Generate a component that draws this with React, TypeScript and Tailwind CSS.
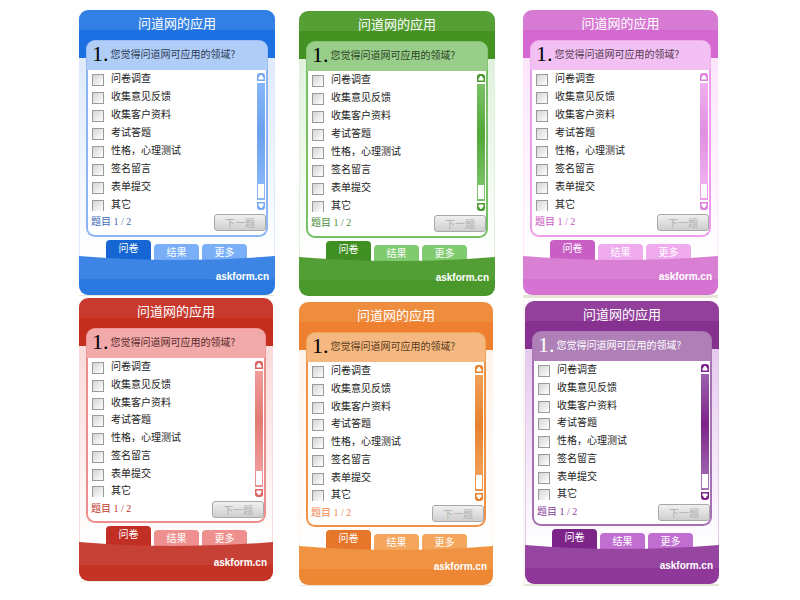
import React from 'react';

type Theme = { id: string; colors: string; compact: boolean; frame: string; mat: string };

const OPTIONS = ['问卷调查', '收集意见反馈', '收集客户资料', '考试答题', '性格，心理测试', '签名留言', '表单提交', '其它'];

const BLUE: Theme = {
  id: 'blue',
  compact: false,
  frame: 'w-[196px]',
  mat: 'border-b border-[#e9e7da]',
  colors:
    '[--top:#3380e4] [--mid:#1c70e2] [--head:#b0cdf8] [--line:#8bb5f5] [--tint:#dfeafb] [--active:#1566d2] [--tab:#7aaff7] [--foot:#3c85e4] [--base:#2a79e0] [--ink:#3b68b8] [--bar:#86b5fa] [--core:#6ba2ec] [--knob:#78a8f0] [--num:#000000] [--ask:#2c3c55]',
};
const GREEN: Theme = {
  id: 'green',
  compact: false,
  frame: 'w-[196px]',
  mat: '',
  colors:
    '[--top:#559f35] [--mid:#449322] [--head:#98ce89] [--line:#76c065] [--tint:#e0f2dc] [--active:#3f8f22] [--tab:#80cb70] [--foot:#549f35] [--base:#4a982b] [--ink:#4d8f3d] [--bar:#79c266] [--core:#52a738] [--knob:#4a9a30] [--num:#000000] [--ask:#2c4526]',
};
const PINK: Theme = {
  id: 'pink',
  compact: false,
  frame: 'w-[195px]',
  mat: 'border-b-3 border-[#e6e4d4]',
  colors:
    '[--top:#d67ad3] [--mid:#d568d0] [--head:#f2c0f2] [--line:#ec9dec] [--tint:#fbe6fb] [--active:#c95fc5] [--tab:#efabee] [--foot:#d980d5] [--base:#d672d1] [--ink:#c855c4] [--bar:#f0b0ef] [--core:#e08ee0] [--knob:#dd80dc] [--num:#000000] [--ask:#553a55]',
};
const RED: Theme = {
  id: 'red',
  compact: true,
  frame: 'w-[194px]',
  mat: 'border-b border-[#f0eee6]',
  colors:
    '[--top:#c8392e] [--mid:#c42e1c] [--head:#f1a9a9] [--line:#ee8d8d] [--tint:#fadada] [--active:#c12e24] [--tab:#ee908e] [--foot:#c74035] [--base:#c43325] [--ink:#c0352b] [--bar:#f09c99] [--core:#e27a74] [--knob:#dc625e] [--num:#000000] [--ask:#5a2c2c]',
};
const ORANGE: Theme = {
  id: 'orange',
  compact: true,
  frame: 'w-[194px]',
  mat: 'border-b border-[#e9e7da]',
  colors:
    '[--top:#ef8d3f] [--mid:#ee8030] [--head:#f5b880] [--line:#f0914a] [--tint:#fdf3ea] [--active:#e6762a] [--tab:#f4a65c] [--foot:#ef9242] [--base:#ee8734] [--ink:#ee8850] [--bar:#f2a057] [--core:#e6822e] [--knob:#ea7f2a] [--num:#000000] [--ask:#5a3c20]',
};
const PURPLE: Theme = {
  id: 'purple',
  compact: true,
  frame: 'w-[194px]',
  mat: 'border-b-2 border-l-2 border-b-[#e6e4d4] border-l-[#f7f6f0]',
  colors:
    '[--top:#92409c] [--mid:#86308f] [--head:#ae80b7] [--line:#a570b5] [--tint:#e6caee] [--active:#7d2489] [--tab:#c06ed0] [--foot:#9645a0] [--base:#8f389a] [--ink:#85409a] [--bar:#9c62ad] [--core:#7d2489] [--knob:#7d2489] [--num:#ffffff] [--ask:#ffffff]',
};

function ScrollButton({ down }: { down?: boolean }) {
  return (
    <button type="button" aria-label={down ? '向下滚动' : '向上滚动'} className="block h-2 w-2 text-(--knob)">
      <svg viewBox="0 0 8 8" className={down ? 'block size-2 rotate-180' : 'block size-2'}>
        <path d="M0 8V3Q0 0 3 0H5Q8 0 8 3V8Z" fill="currentColor" />
        <path d="M1.5 6.5V4.8L3.4 2H4.6L6.5 4.8V6.5Z" fill="#fff" />
      </svg>
    </button>
  );
}

function ScrollBar() {
  return (
    <div className="flex w-2 flex-col">
      <ScrollButton />
      <div className="mt-0.5 flex flex-1 flex-col bg-(--line) px-px pb-0.5">
        <div className="-mx-px flex-1 bg-[linear-gradient(to_bottom,var(--bar),var(--core)_50%,var(--bar))]" />
        <div className="h-[14px] bg-white" />
      </div>
      <div className="mt-0.5">
        <ScrollButton down />
      </div>
    </div>
  );
}

function Widget({ theme }: { theme: Theme }) {
  const { id, compact, frame, colors, mat } = theme;
  return (
    <div className={`w-fit ${mat}`}>
      <section className={`${colors} ${frame} flex flex-col overflow-hidden rounded-[9px]`}>
        <header className="h-12 bg-[linear-gradient(to_bottom,var(--top)_20px,var(--mid)_20px)] pt-[3px] text-center">
          <h2 className="text-[13px] leading-5 text-white">问道网的应用</h2>
        </header>

        <div className="border-x border-(--tint) bg-linear-to-b from-(--tint) to-white px-[6px]">
          <form className="-mt-[18px]">
            <div className="flex h-[30px] items-center gap-0.5 rounded-t-[9px] border border-b-0 border-(--line)/60 bg-(--head) pb-1 pl-[5px]">
              <span className="font-['Liberation_Serif',serif] text-[22px] leading-none text-(--num)">1.</span>
              <p className="text-[10px] leading-4 text-(--ask)">您觉得问道网可应用的领域?</p>
            </div>
            <div className="rounded-b-[9px] border-x-2 border-b-2 border-(--line) bg-white">
              <div className="flex justify-between pr-px">
                <div className={`${compact ? 'h-[141px]' : 'h-[142px]'} pl-1`}>
                  <div className={`${compact ? 'h-[142px]' : 'h-36'} grid grid-rows-8`}>
                    {OPTIONS.map((label, i) => (
                      <div key={label} className="group flex gap-[7px]">
                        <input
                          type="checkbox"
                          id={`${id}-${i}`}
                          className="mt-1 size-3 shrink-0 appearance-none border border-[#9a9a9a] bg-linear-to-br from-[#d4d4d4] to-white group-last:h-[11px] group-last:border-b-0"
                        />
                        <label htmlFor={`${id}-${i}`} className="text-[10px] leading-4 text-[#222]">
                          {label}
                        </label>
                      </div>
                    ))}
                  </div>
                </div>
                <div className="flex pt-[3px] pb-0.5">
                  <ScrollBar />
                </div>
              </div>
              <div className={`${compact ? 'h-[22px]' : 'h-[23px]'} flex items-start justify-between pt-0.5 pl-[3px]`}>
                <p className="font-['Liberation_Serif','Noto_Sans_CJK_SC',serif] text-[10px] leading-4 text-(--ink)">
                  题目 1 / 2
                </p>
                <button
                  type="button"
                  className="h-[17px] w-[52px] rounded-[3px] border border-[#a8a8a8] bg-linear-to-b from-[#f0f0f0] to-[#cfcfcf] text-[10px] leading-[14px] text-[#b0b0b0]"
                >
                  下一题
                </button>
              </div>
            </div>
          </form>
          <nav className="mt-[3px] flex h-5 items-end gap-[3px] pl-5 text-center text-[10px] text-white">
            <button type="button" className="h-5 w-[45px] rounded-t-[4px] bg-(--active) pb-1 leading-4">
              问卷
            </button>
            <button type="button" className="h-4 w-[45px] rounded-t-[4px] bg-(--tab) leading-4">
              结果
            </button>
            <button type="button" className="h-4 w-[45px] rounded-t-[4px] bg-(--tab) leading-4">
              更多
            </button>
          </nav>
        </div>

        <footer className="relative -mt-1 flex h-[39px] flex-col text-(--foot)">
          <svg viewBox="0 0 196 5" preserveAspectRatio="none" className="block h-[5px] w-full">
            <path d="M0 0Q98 8 196 0V5H0Z" fill="currentColor" />
          </svg>
          <div className="flex-1 bg-[linear-gradient(to_bottom,var(--foot)_18px,var(--base)_18px)] pt-2 pr-[6px] text-right">
            <a href="#askform" className="block font-['Liberation_Sans',Arial,sans-serif] text-[10px] leading-4 font-bold text-white">
              askform.cn
            </a>
          </div>
        </footer>
      </section>
    </div>
  );
}

export default function App() {
  return (
    <main className="grid min-h-screen grid-cols-[220fr_224fr_196fr] bg-white pr-[81px] pl-[79px] font-['Noto_Sans_CJK_SC',sans-serif]">
      <div className="flex flex-col gap-0.5 pt-2.5">
        <Widget theme={BLUE} />
        <Widget theme={RED} />
      </div>
      <div className="flex flex-col gap-[6px] pt-[11px]">
        <Widget theme={GREEN} />
        <Widget theme={ORANGE} />
      </div>
      <div className="flex flex-col gap-[3px] pt-2.5">
        <Widget theme={PINK} />
        <Widget theme={PURPLE} />
      </div>
    </main>
  );
}
